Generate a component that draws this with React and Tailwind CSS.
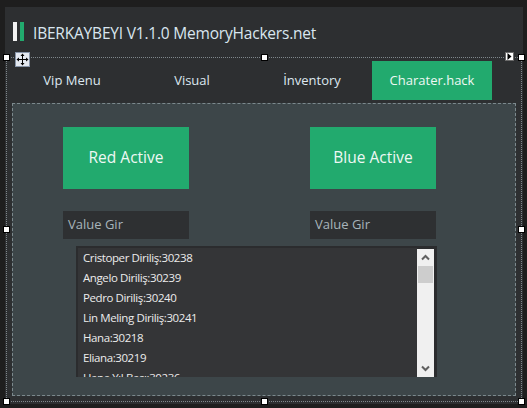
import React from "react";

const items = [
  "Cristoper Diriliş:30238",
  "Angelo Diriliş:30239",
  "Pedro Diriliş:30240",
  "Lin Meling Diriliş:30241",
  "Hana:30218",
  "Eliana:30219",
  "Hana Yıl Başı:30236",
];

const handles = [
  [6, 57], [264, 57], [521, 57],
  [6, 229], [521, 229],
  [6, 401], [264, 401], [521, 401],
];

function Handle({ x, y }) {
  return (
    <div
      className="absolute w-[7px] h-[7px] bg-white border border-black"
      style={{ left: x - 3, top: y - 3 }}
    />
  );
}

export default function App() {
  return (
    <div className="relative w-[527px] h-[408px] bg-[#1e1e1e] pt-[7px] pl-[5px] pr-[4px] pb-[4px] overflow-hidden font-['Open_Sans','Noto_Sans',sans-serif]">
      <div className="h-full bg-[#2d2f31] flex flex-col">
        {/* Title */}
        <div className="h-[54px] flex items-start pt-[15px] pl-[8px]">
          <div className="w-[4px] h-[19px] bg-[#f2f2f2]" />
          <div className="w-[4px] h-[19px] bg-[#22aa6e] ml-[3px]" />
          <div className="ml-[9px] mt-[1px] text-[15.5px] leading-[20px] text-[#d9e6ef] tracking-[-0.2px]">
            IBERKAYBEYI V1.1.0 MemoryHackers.net
          </div>
        </div>

        {/* Tab control */}
        <div className="ml-[7px] w-[504px] flex flex-col">
          <div className="h-[39px] flex text-[13px] text-[#dde8f0]">
            <div className="w-[120px] flex items-center justify-center">Vip Menu</div>
            <div className="w-[120px] flex items-center justify-center">Visual</div>
            <div className="w-[120px] flex items-center justify-center">İnventory</div>
            <div className="w-[120px] flex items-center justify-center bg-[#22aa6e] text-[#eef8f4]">Charater.hack</div>
          </div>
          <div className="mt-[3px] h-[293px] border border-dashed border-[#7c898d] bg-[#3d4649] pt-[23px] pl-[50px]">
            <div className="flex gap-[121px]">
              <div className="w-[126px] h-[62px] bg-[#22aa6e] flex items-center justify-center text-[15.5px] text-[#eef8f4]">
                Red Active
              </div>
              <div className="w-[126px] h-[62px] bg-[#22aa6e] flex items-center justify-center text-[15.5px] text-[#eef8f4]">
                Blue Active
              </div>
            </div>
            <div className="flex gap-[121px] mt-[22px]">
              <div className="w-[126px] h-[28px] bg-[#2e3032] flex items-center pl-[5px] text-[13px] text-[#a7b4bb]">
                Value Gir
              </div>
              <div className="w-[126px] h-[28px] bg-[#2e3032] flex items-center pl-[5px] text-[13px] text-[#a7b4bb]">
                Value Gir
              </div>
            </div>
            <div className="mt-[7px] ml-[13px] w-[361px] h-[131px] bg-[#2b2c2e] pt-[2px] pl-[2px] pr-[3px] flex">
              <div className="flex-1 bg-[#343537] overflow-hidden pl-[5px]">
                {items.map((t) => (
                  <div key={t} className="h-[20px] flex items-center text-[11.5px] text-[#ececec] tracking-[-0.4px] whitespace-nowrap">
                    {t}
                  </div>
                ))}
              </div>
              <div className="w-[17px] mt-[1px] bg-[#f0f0f0] flex flex-col items-center">
                <div className="h-[17px] w-full flex items-center justify-center">
                  <svg width="9" height="7" viewBox="0 0 9 7">
                    <path d="M1 5.5 L4.5 2 L8 5.5" fill="none" stroke="#606060" strokeWidth="2" />
                  </svg>
                </div>
                <div className="w-[15px] h-[17px] bg-[#cdcdcd]" />
                <div className="flex-1" />
                <div className="h-[17px] w-full flex items-center justify-center">
                  <svg width="9" height="7" viewBox="0 0 9 7">
                    <path d="M1 1.5 L4.5 5 L8 1.5" fill="none" stroke="#606060" strokeWidth="2" />
                  </svg>
                </div>
              </div>
            </div>
          </div>
        </div>
      </div>

      {/* Designer selection overlay */}
      <div className="absolute left-[6px] top-[57px] w-[516px] border-t border-dotted border-[#7f878c]" />
      <div className="absolute left-[6px] top-[401px] w-[516px] border-t border-dotted border-[#7f878c]" />
      <div className="absolute left-[6px] top-[57px] h-[345px] border-l border-dotted border-[#7f878c]" />
      <div className="absolute left-[521px] top-[57px] h-[345px] border-l border-dotted border-[#7f878c]" />
      {handles.map(([x, y]) => (
        <Handle key={x + "-" + y} x={x} y={y} />
      ))}

      {/* Move glyph */}
      <div className="absolute left-[15px] top-[52px] w-[15px] h-[15px] bg-[#e4e9f0] border border-[#8694a8] flex items-center justify-center">
        <svg width="13" height="13" viewBox="0 0 13 13">
          <path d="M6.5 2 V11 M2 6.5 H11" stroke="#000" strokeWidth="1" />
          <path d="M6.5 0.5 L4.5 3 H8.5 Z M6.5 12.5 L4.5 10 H8.5 Z M0.5 6.5 L3 4.5 V8.5 Z M12.5 6.5 L10 4.5 V8.5 Z" fill="#000" />
        </svg>
      </div>

      {/* Smart tag */}
      <div className="absolute left-[505px] top-[52px] w-[9px] h-[9px] bg-white border border-[#6a6a6a] flex items-center justify-center">
        <svg width="5" height="7" viewBox="0 0 5 7">
          <path d="M0.5 0 L4.5 3.5 L0.5 7 Z" fill="#000" />
        </svg>
      </div>
    </div>
  );
}
